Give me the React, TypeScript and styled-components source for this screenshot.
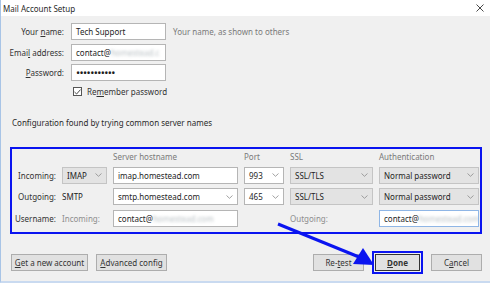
import React from "react";
import styled, { createGlobalStyle } from "styled-components";

const GlobalStyle = createGlobalStyle`
  html, body {
    margin: 0;
    padding: 0;
    background: #f0f0f0;
  }
  * {
    box-sizing: border-box;
  }
`;

const Window = styled.div`
  position: relative;
  width: 490px;
  height: 283px;
  display: flex;
  flex-direction: column;
  background: #f0f0f0;
  border-left: 1px solid #a8c4e6;
  border-bottom: 2px solid #c9daf0;
  font-family: "Noto Sans", "Open Sans", sans-serif;
  font-size: 8px;
  color: #1e1e1e;
  overflow: hidden;
`;

const TitleBar = styled.div`
  height: 16px;
  flex: none;
  display: flex;
  align-items: center;
  justify-content: space-between;
  padding: 0 6px 0 2px;
  background: #ffffff;
  color: #2a2a2a;
`;

const Body = styled.div`
  flex: 1;
  display: flex;
  flex-direction: column;
  padding: 7px 4px 0 8px;
`;

const IdentityGrid = styled.div`
  display: grid;
  grid-template-columns: 55px 95px auto;
  column-gap: 7px;
  row-gap: 3.5px;
  align-items: center;
`;

const Label = styled.label<{ $muted?: boolean }>`
  text-align: right;
  white-space: nowrap;
  color: ${(p) => (p.$muted ? "#8e8e8e" : "#333")};
`;

const LeftText = styled.span<{ $muted?: boolean }>`
  white-space: nowrap;
  color: ${(p) => (p.$muted ? "#8e8e8e" : "#222")};
`;

const Hint = styled.span`
  color: #7a7a7a;
  white-space: nowrap;
`;

const Field = styled.div<{ $focus?: boolean }>`
  height: 17px;
  display: flex;
  align-items: center;
  padding: 0 4px;
  background: #fff;
  border: 1px solid ${(p) => (p.$focus ? "#8fb6e6" : "#b5b5b5")};
  white-space: nowrap;
  overflow: hidden;
`;

const Dots = styled.span`
  font-size: 11px;
  letter-spacing: -0.6px;
  line-height: 1;
`;

const Blur = styled.span`
  color: #b9c0c4;
  filter: blur(1.4px);
`;

const CheckRow = styled.div`
  display: flex;
  align-items: center;
  gap: 5px;
  margin: 5px 0 0 64px;
  color: #333;
`;

const CheckBox = styled.span`
  width: 9px;
  height: 9px;
  border: 1px solid #555;
  background: #fff;
  display: flex;
  align-items: center;
  justify-content: center;
`;

const Status = styled.div`
  margin: 20px 0 0 3px;
  color: #2a2a2a;
`;

const ServerBox = styled.div`
  margin: 19px 4px 0 1px;
  border: 2px solid #0a14f0;
  padding: 1px 4px 5px 0;
  display: grid;
  grid-template-columns: 44px 45px 125px 40px 83px 100px;
  column-gap: 6px;
  row-gap: 4.5px;
  align-items: center;
`;

const Header = styled.span`
  color: #7a7a7a;
  height: 12px;
  display: flex;
  align-items: center;
`;

const SelectBox = styled.div<{ $grey?: boolean }>`
  height: 17px;
  display: flex;
  align-items: center;
  justify-content: space-between;
  padding: 0 4px 0 4px;
  border: 1px solid ${(p) => (p.$grey ? "#c4c4c4" : "#b5b5b5")};
  background: ${(p) => (p.$grey ? "#e3e3e3" : "#fff")};
  white-space: nowrap;
`;

const Buttons = styled.div`
  margin-top: 20px;
  display: flex;
  align-items: center;
  padding: 0 4px 0 2px;
  gap: 8px;
`;

const Spacer = styled.div`
  flex: 1;
`;

const Button = styled.div<{ $w: number; $default?: boolean }>`
  width: ${(p) => p.$w}px;
  height: 17px;
  display: flex;
  align-items: center;
  justify-content: center;
  background: #e1e1e1;
  border: 1px solid ${(p) => (p.$default ? "#333" : "#adadad")};
  color: #333;
  font-weight: ${(p) => (p.$default ? 700 : 400)};
`;

const Highlight = styled.div`
  padding: 1px;
  border: 2px solid #0a14f0;
  margin: -3px 0;
`;

const Arrow = styled.svg`
  position: absolute;
  left: 0;
  top: 0;
  pointer-events: none;
`;

const Chevron = () => (
  <svg width="7" height="4" viewBox="0 0 7 4">
    <path d="M0.5 0.5 L3.5 3.3 L6.5 0.5" fill="none" stroke="#8a8a8a" strokeWidth="0.8" />
  </svg>
);

const Select = ({ value, grey }: { value: React.ReactNode; grey?: boolean }) => (
  <SelectBox $grey={grey}>
    <span>{value}</span>
    <Chevron />
  </SelectBox>
);

const Email = ({ domain = "homestead.com" }: { domain?: string }) => (
  <>
    contact@<Blur>{domain}</Blur>
  </>
);

export default function App() {
  return (
    <>
      <GlobalStyle />
      <Window>
        <TitleBar>
          <span>Mail Account Setup</span>
          <svg width="8" height="8" viewBox="0 0 8 8">
            <path d="M0.5 0.5 L7.5 7.5 M7.5 0.5 L0.5 7.5" stroke="#333" strokeWidth="0.9" />
          </svg>
        </TitleBar>
        <Body>
          <IdentityGrid>
            <Label>
              Your <u>n</u>ame:
            </Label>
            <Field>Tech Support</Field>
            <Hint>Your name, as shown to others</Hint>
            <Label>
              Emai<u>l</u> address:
            </Label>
            <Field>
              <Email domain="homestead.c" />
            </Field>
            <span />
            <Label>
              <u>P</u>assword:
            </Label>
            <Field>
              <Dots>•••••••••••</Dots>
            </Field>
            <span />
          </IdentityGrid>
          <CheckRow>
            <CheckBox>
              <svg width="7" height="6" viewBox="0 0 7 6">
                <path d="M0.5 3 L2.6 5 L6.5 0.6" fill="none" stroke="#333" strokeWidth="0.9" />
              </svg>
            </CheckBox>
            <span>
              Re<u>m</u>ember password
            </span>
          </CheckRow>
          <Status>Configuration found by trying common server names</Status>
          <ServerBox>
            <span />
            <span />
            <Header>Server hostname</Header>
            <Header>Port</Header>
            <Header>SSL</Header>
            <Header>Authentication</Header>

            <Label>Incoming:</Label>
            <Select value="IMAP" grey />
            <Field>imap.homestead.com</Field>
            <Select value="993" />
            <Select value="SSL/TLS" grey />
            <Select value="Normal password" grey />

            <Label>Outgoing:</Label>
            <LeftText>SMTP</LeftText>
            <Select value="smtp.homestead.com" />
            <Select value="465" />
            <Select value="SSL/TLS" grey />
            <Select value="Normal password" grey />

            <Label>Username:</Label>
            <LeftText $muted>Incoming:</LeftText>
            <Field>
              <Email />
            </Field>
            <span />
            <LeftText $muted>Outgoing:</LeftText>
            <Field $focus>
              <Email />
            </Field>
          </ServerBox>
          <Buttons>
            <Button $w={77}>
              <span>
                <u>G</u>et a new account
              </span>
            </Button>
            <Button $w={71}>
              <span>
                <u>A</u>dvanced config
              </span>
            </Button>
            <Spacer />
            <Button $w={51}>
              <span>
                Re-<u>t</u>est
              </span>
            </Button>
            <Highlight>
              <Button $w={45} $default>
                <span>
                  <u>D</u>one
                </span>
              </Button>
            </Highlight>
            <Button $w={51}>
              <span>
                C<u>a</u>ncel
              </span>
            </Button>
          </Buttons>
        </Body>
        <Arrow width="490" height="283" viewBox="0 0 490 283">
          <line x1="277" y1="224" x2="358" y2="257" stroke="#0a14f0" strokeWidth="3" />
          <polygon points="373,265 352,264 362,248" fill="#0a14f0" />
        </Arrow>
      </Window>
    </>
  );
}
